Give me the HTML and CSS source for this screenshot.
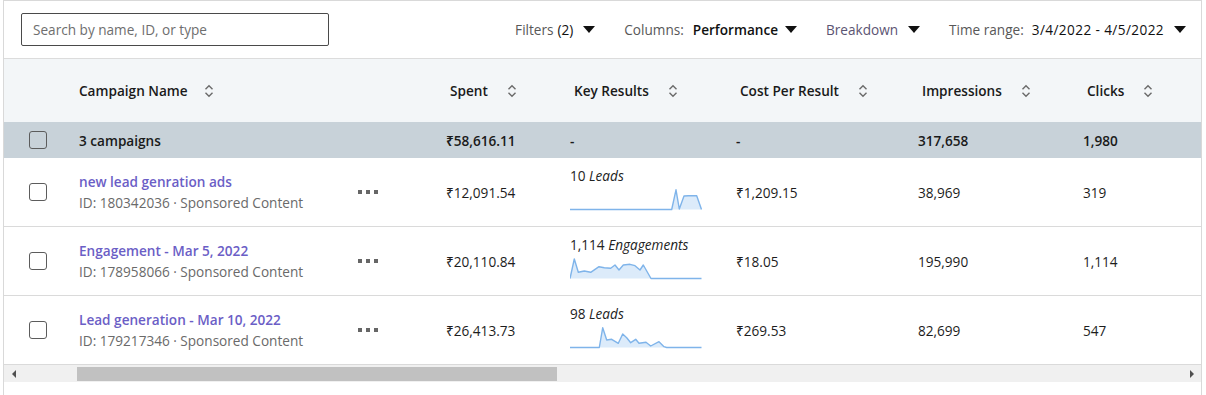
FILE: index.html
```html
<!DOCTYPE html>
<html>
<head>
<meta charset="utf-8">
<link rel="stylesheet" href="styles.css">
</head>
<body>
<div class="frame">
  <div class="toolbar">
    <div class="search">Search by name, ID, or type</div>
    <div class="tools">
      <div class="tool"><span class="lbl">Filters</span><span class="val-reg v4">(2)</span><span class="caret c10"></span></div>
      <div class="tool"><span class="lbl">Columns:</span><span class="val v9">Performance</span><span class="caret c7"></span></div>
      <div class="tool"><span class="lbl brk">Breakdown</span><span class="caret c10"></span></div>
      <div class="tool"><span class="lbl">Time range:</span><span class="val-reg v8 date">3/4/2022 - 4/5/2022</span><span class="caret c10"></span></div>
    </div>
  </div>

  <div class="grid head">
    <div class="cell"></div>
    <div class="cell span2">Campaign Name<svg class="sort sort-name" viewBox="0 0 10 14"><path d="M1.5 5.2 L5 1.7 L8.5 5.2 M1.5 8.8 L5 12.3 L8.5 8.8"/></svg></div>
    <div class="cell num">Spent<svg class="sort" viewBox="0 0 10 14"><path d="M1.5 5.2 L5 1.7 L8.5 5.2 M1.5 8.8 L5 12.3 L8.5 8.8"/></svg></div>
    <div class="cell num">Key Results<svg class="sort" viewBox="0 0 10 14"><path d="M1.5 5.2 L5 1.7 L8.5 5.2 M1.5 8.8 L5 12.3 L8.5 8.8"/></svg></div>
    <div class="cell num">Cost Per Result<svg class="sort" viewBox="0 0 10 14"><path d="M1.5 5.2 L5 1.7 L8.5 5.2 M1.5 8.8 L5 12.3 L8.5 8.8"/></svg></div>
    <div class="cell num">Impressions<svg class="sort" viewBox="0 0 10 14"><path d="M1.5 5.2 L5 1.7 L8.5 5.2 M1.5 8.8 L5 12.3 L8.5 8.8"/></svg></div>
    <div class="cell num">Clicks<svg class="sort" viewBox="0 0 10 14"><path d="M1.5 5.2 L5 1.7 L8.5 5.2 M1.5 8.8 L5 12.3 L8.5 8.8"/></svg></div>
  </div>

  <div class="grid summary">
    <div class="cell"><span class="check"></span></div>
    <div class="cell">3 campaigns</div>
    <div class="cell"></div>
    <div class="cell">₹58,616.11</div>
    <div class="cell">-</div>
    <div class="cell">-</div>
    <div class="cell">317,658</div>
    <div class="cell">1,980</div>
  </div>

  <div class="grid row">
    <div class="cell"><span class="check"></span></div>
    <div class="cell name"><div class="link">new lead genration ads</div><div class="meta">ID: 180342036 · Sponsored Content</div></div>
    <div class="cell"><span class="dots"><i></i><i></i><i></i></span></div>
    <div class="cell">₹12,091.54</div>
    <div class="cell kr"><div class="krlabel">10 <em>Leads</em></div>
      <svg class="spark" viewBox="0 0 132 22"><polygon class="area" points="0,20.5 101.7,20.5 106,0.8 109.3,20 114,7 118.3,6.7 126.7,6.7 131.5,20.5"/><polyline class="ln" points="0,20.5 101.7,20.5 106,0.8 109.3,20 114,7 118.3,6.7 126.7,6.7 131.5,20.5"/></svg>
    </div>
    <div class="cell">₹1,209.15</div>
    <div class="cell">38,969</div>
    <div class="cell">319</div>
  </div>

  <div class="grid row">
    <div class="cell"><span class="check"></span></div>
    <div class="cell name"><div class="link">Engagement - Mar 5, 2022</div><div class="meta">ID: 178958066 · Sponsored Content</div></div>
    <div class="cell"><span class="dots"><i></i><i></i><i></i></span></div>
    <div class="cell">₹20,110.84</div>
    <div class="cell kr"><div class="krlabel">1,114 <em>Engagements</em></div>
      <svg class="spark" viewBox="0 0 132 22"><polygon class="area" points="0,20.5 4.3,1 8.3,14.3 14.3,13 20.7,14.3 29,8.7 34.3,9.7 40.7,10.3 45,7 49,12 53.3,7 60,6.3 65,7.7 70,12 73.3,7 81,20.5 131.5,20.5"/><polyline class="ln" points="0,20.5 4.3,1 8.3,14.3 14.3,13 20.7,14.3 29,8.7 34.3,9.7 40.7,10.3 45,7 49,12 53.3,7 60,6.3 65,7.7 70,12 73.3,7 81,20.5 131.5,20.5"/></svg>
    </div>
    <div class="cell">₹18.05</div>
    <div class="cell">195,990</div>
    <div class="cell">1,114</div>
  </div>

  <div class="grid row">
    <div class="cell"><span class="check"></span></div>
    <div class="cell name"><div class="link">Lead generation - Mar 10, 2022</div><div class="meta">ID: 179217346 · Sponsored Content</div></div>
    <div class="cell"><span class="dots"><i></i><i></i><i></i></span></div>
    <div class="cell">₹26,413.73</div>
    <div class="cell kr"><div class="krlabel">98 <em>Leads</em></div>
      <svg class="spark" viewBox="0 0 132 22"><polygon class="area" points="0,20.5 29.3,20.5 32.7,0.8 36.7,13 41.7,12.3 48.3,16.3 52.7,7 56.7,10.7 60.7,15.7 65.7,12.3 69,16.3 76,15.3 80.7,19 89,14.7 94,19.7 96.7,20.5 131.5,20.5"/><polyline class="ln" points="0,20.5 29.3,20.5 32.7,0.8 36.7,13 41.7,12.3 48.3,16.3 52.7,7 56.7,10.7 60.7,15.7 65.7,12.3 69,16.3 76,15.3 80.7,19 89,14.7 94,19.7 96.7,20.5 131.5,20.5"/></svg>
    </div>
    <div class="cell">₹269.53</div>
    <div class="cell">82,699</div>
    <div class="cell">547</div>
  </div>

  <div class="hscroll">
    <span class="arr arr-l"></span>
    <div class="track"><div class="thumb"></div></div>
    <span class="arr arr-r"></span>
  </div>
</div>
</body>
</html>
```

FILE: styles.css
```css
* { box-sizing: border-box; }
html, body { margin: 0; padding: 0; background: #fff; }
body {
  font-family: "Open Sans", "Noto Sans", sans-serif;
  font-size: 13.6px;
  color: #1d1d1d;
}
.frame {
  margin-left: 3px;
  width: 1199px;
  height: 395px;
  border: 1px solid #d9d9d9;
  border-bottom: none;
  overflow: hidden;
}
.toolbar {
  height: 58px;
  display: flex;
  align-items: center;
  border-bottom: 1px solid #dcdcdc;
  padding: 0 15px 0 17px;
}
.search {
  width: 308px;
  height: 33px;
  border: 1px solid #4a4a4a;
  border-radius: 2px;
  padding-left: 11px;
  display: flex;
  align-items: center;
  color: #6e6e6e;
  font-size: 13.6px;
}
.tools {
  margin-left: auto;
  display: flex;
  align-items: center;
  gap: 29px;
}
.tool { display: flex; align-items: center; white-space: nowrap; }
.lbl { color: #585858; }
.brk { color: #5b5472; }
.val { color: #111; font-weight: 600; }
.val-reg { color: #111; }
.v4 { margin-left: 4px; }
.v8 { margin-left: 8px; }
.v9 { margin-left: 9px; }
.date { letter-spacing: 0.4px; }
.caret {
  width: 0; height: 0;
  border-left: 6px solid transparent;
  border-right: 6px solid transparent;
  border-top: 7px solid #111;
}
.c10 { margin-left: 10px; }
.c7 { margin-left: 7px; }

.grid {
  display: grid;
  grid-template-columns: 75px 279px 88px 124px 166px 182px 165px 1fr;
}
.cell { display: flex; align-items: center; white-space: nowrap; }
.head {
  height: 63px;
  background: #f3f6f8;
  font-weight: 600;
  color: #1a1a1a;
}
.head .span2 { grid-column: 2 / 4; }
.head .num { padding-left: 4px; }
.sort {
  width: 10px; height: 14px;
  margin-left: 19px;
  fill: none;
  stroke: #6a6a6a;
  stroke-width: 1.4;
}
.sort-name { margin-left: 16px; }
.summary {
  height: 36px;
  background: #c8d2d9;
  font-weight: 600;
  color: #1a1a1a;
}
.row {
  height: 69px;
  border-bottom: 1px solid #dadada;
  color: #1d1d1d;
}
.check {
  display: block;
  width: 18px; height: 18px;
  margin-left: 25px;
  border: 1px solid #5c5c5c;
  border-radius: 3px;
  background: #fff;
}
.summary .check { background: transparent; }
.name { flex-direction: column; align-items: flex-start; justify-content: center; }
.link { color: #6b5ec6; font-weight: 600; line-height: 21px; }
.meta { color: #6a6a6a; line-height: 21px; }
.dots { display: flex; gap: 4px; }
.dots i { display: block; width: 4px; height: 4px; background: #666; }
.kr {
  flex-direction: column;
  align-items: flex-start;
  justify-content: flex-start;
  padding-top: 8px;
}
.krlabel { line-height: 20px; color: #222; }
.krlabel em { font-style: italic; }
.spark { width: 132px; height: 22px; margin-top: 3px; display: block; }
.spark .area { fill: #dcebfa; stroke: none; }
.spark .ln { fill: none; stroke: #7fb4ea; stroke-width: 1.4; stroke-linejoin: round; }

.hscroll {
  height: 17px;
  background: #f0f0f0;
  display: flex;
  align-items: center;
}
.arr { width: 0; height: 0; border-top: 4px solid transparent; border-bottom: 4px solid transparent; }
.arr-l { border-right: 4px solid #505050; margin-left: 8px; }
.arr-r { border-left: 4px solid #505050; margin-right: 7px; }
.track { flex: 1; height: 100%; display: flex; align-items: center; padding-left: 61px; }
.thumb { width: 480px; height: 14px; background: #c1c1c1; }
```
